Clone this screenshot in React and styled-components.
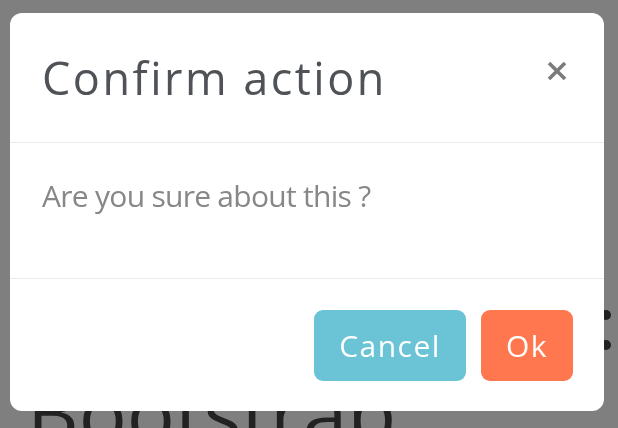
import React from 'react';
import styled, { createGlobalStyle } from 'styled-components';

const GlobalStyle = createGlobalStyle`
    html, body {
        margin: 0;
        padding: 0;
        background: #ffffff;
        font-family: "Open Sans", "Noto Sans", sans-serif;
        overflow: hidden;
    }
    * {
        box-sizing: border-box;
    }
`;

const PageDiv = styled.div`
    height: 100vh;
    overflow: hidden;
    padding: 305px 7px 0 27px;
    display: flex;
    flex-direction: column;
`;

const DotsRow = styled.div`
    display: flex;
    justify-content: flex-end;
    height: 50px;
`;

const Dots = styled.div`
    display: flex;
    flex-direction: column;
    gap: 20px;
    padding-top: 5px;
`;

const Dot = styled.span`
    width: 10px;
    height: 10px;
    border-radius: 50%;
    background: #444;
`;

const BigTitle = styled.h1`
    margin: 22px 0 0 0;
    font-size: 80px;
    line-height: 1;
    font-weight: 400;
    color: #444;
`;

const Backdrop = styled.div`
    position: fixed;
    inset: 0;
    background: rgba(0, 0, 0, 0.5);
    padding: 13px 14px 0 10px;
`;

const ModalBox = styled.div`
    width: 594px;
    background: #fff;
    border-radius: 12px;
    display: flex;
    flex-direction: column;
    overflow: hidden;
`;

const Header = styled.div`
    display: flex;
    align-items: center;
    padding: 31px 37px 31px 32px;
    border-bottom: 1px solid #e9ecef;
`;

const Title = styled.h4`
    margin: 0;
    flex: 1;
    font-size: 45px;
    line-height: 67px;
    font-weight: 400;
    letter-spacing: 2.5px;
    color: #4f5358;
`;

const CloseButton = styled.button`
    align-self: flex-start;
    margin-top: 17px;
    width: 20px;
    height: 20px;
    padding: 0;
    border: 0;
    background: transparent;
    cursor: pointer;
    display: flex;

    svg {
        display: block;
    }
`;

const Body = styled.div`
    padding: 30px 30px 30px 32px;
`;

const Message = styled.p`
    margin: 0 0 30px 0;
    font-size: 30px;
    line-height: 45px;
    color: #878787;
    letter-spacing: -0.72px;
`;

const Footer = styled.div`
    display: flex;
    justify-content: flex-end;
    gap: 15px;
    padding: 31px 31px 30px 30px;
    border-top: 1px solid #e9ecef;
`;

const Button = styled.button`
    height: 71px;
    padding: 0 ${p => p.$pad}px;
    border: 0;
    border-radius: 9px;
    background: ${p => p.$bg};
    color: #fff;
    font-family: "Open Sans", "Noto Sans", sans-serif;
    font-size: 30px;
    line-height: 45px;
    letter-spacing: 1.5px;
    cursor: pointer;
`;

class App extends React.Component {
    render() {
        return (
            <>
                <GlobalStyle />
                <PageDiv>
                    <DotsRow>
                        <Dots>
                            <Dot />
                            <Dot />
                        </Dots>
                    </DotsRow>
                    <BigTitle>Bootstrap</BigTitle>
                </PageDiv>
                <Backdrop>
                    <ModalBox>
                        <Header>
                            <Title>Confirm action</Title>
                            <CloseButton aria-label="Close">
                                <svg width="20" height="20" viewBox="0 0 20 20">
                                    <path d="M2 2 L18 18 M18 2 L2 18" stroke="#7b7b7b" strokeWidth="3.6" strokeLinecap="butt" />
                                </svg>
                            </CloseButton>
                        </Header>
                        <Body>
                            <Message>Are you sure about this ?</Message>
                        </Body>
                        <Footer>
                            <Button $bg="#6bc3d6" $pad={25}>Cancel</Button>
                            <Button $bg="#ff774e" $pad={25}>Ok</Button>
                        </Footer>
                    </ModalBox>
                </Backdrop>
            </>
        );
    }
}

export default App
